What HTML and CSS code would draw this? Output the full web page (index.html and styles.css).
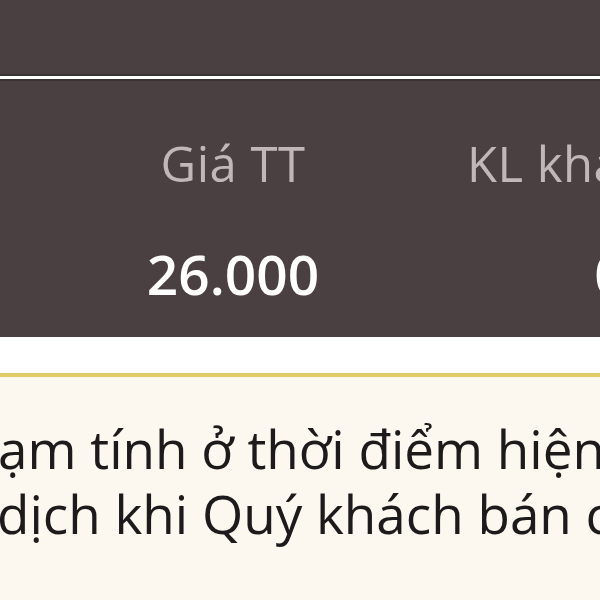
FILE: index.html
```html
<!DOCTYPE html>
<html>
<head>
<meta charset="utf-8">
<link rel="stylesheet" href="styles.css">
</head>
<body>
<div class="page">
  <div class="top-bar"></div>
  <div class="divider"></div>
  <div class="table">
    <div class="col">
      <div class="head">Giá TT</div>
      <div class="val">26.000</div>
    </div>
    <div class="col">
      <div class="head">KL khả dụng</div>
      <div class="val">0</div>
    </div>
  </div>
  <div class="gap"></div>
  <div class="note">
    <div class="line l1">ạm tính ở thời điểm hiện tại</div>
    <div class="line l2">dịch khi Quý khách bán chứng</div>
  </div>
</div>
</body>
</html>
```
FILE: styles.css
```css
html, body {
  margin: 0;
  padding: 0;
  width: 600px;
  height: 600px;
  overflow: hidden;
  background: #ffffff;
  font-family: "Open Sans", "Noto Sans", sans-serif;
}
.page {
  width: 600px;
  height: 600px;
  overflow: hidden;
}
.top-bar {
  height: 74px;
  background: #4a3f41;
  border-bottom: 2px solid #3a3133;
}
.divider {
  height: 3px;
  background: #ffffff;
  border-bottom: 2px solid #3a3133;
}
.table {
  height: 256px;
  background: #4a3f41;
  display: flex;
  gap: 5px;
  width: 900px;
  padding-left: 47px;
  box-sizing: border-box;
}
.col {
  width: 372px;
  flex: none;
  text-align: center;
}
.head {
  color: #c0b8b8;
  font-size: 49px;
  line-height: 64px;
  margin-top: 50px;
  letter-spacing: 0.5px;
}
.val {
  color: #ffffff;
  font-size: 55px;
  font-weight: 600;
  line-height: 64px;
  margin-top: 47px;
}
.gap {
  height: 36px;
  background: #ffffff;
}
.note {
  background: #fcf8ef;
  border-top: 4px solid #dfcb63;
  height: 300px;
  white-space: nowrap;
  color: #1c1a1a;
  font-size: 53px;
  padding-top: 39px;
}
.line {
  line-height: 65px;
}
.l1 {
  margin-left: -2px;
}
.l2 {
  margin-left: -3px;
}
```
